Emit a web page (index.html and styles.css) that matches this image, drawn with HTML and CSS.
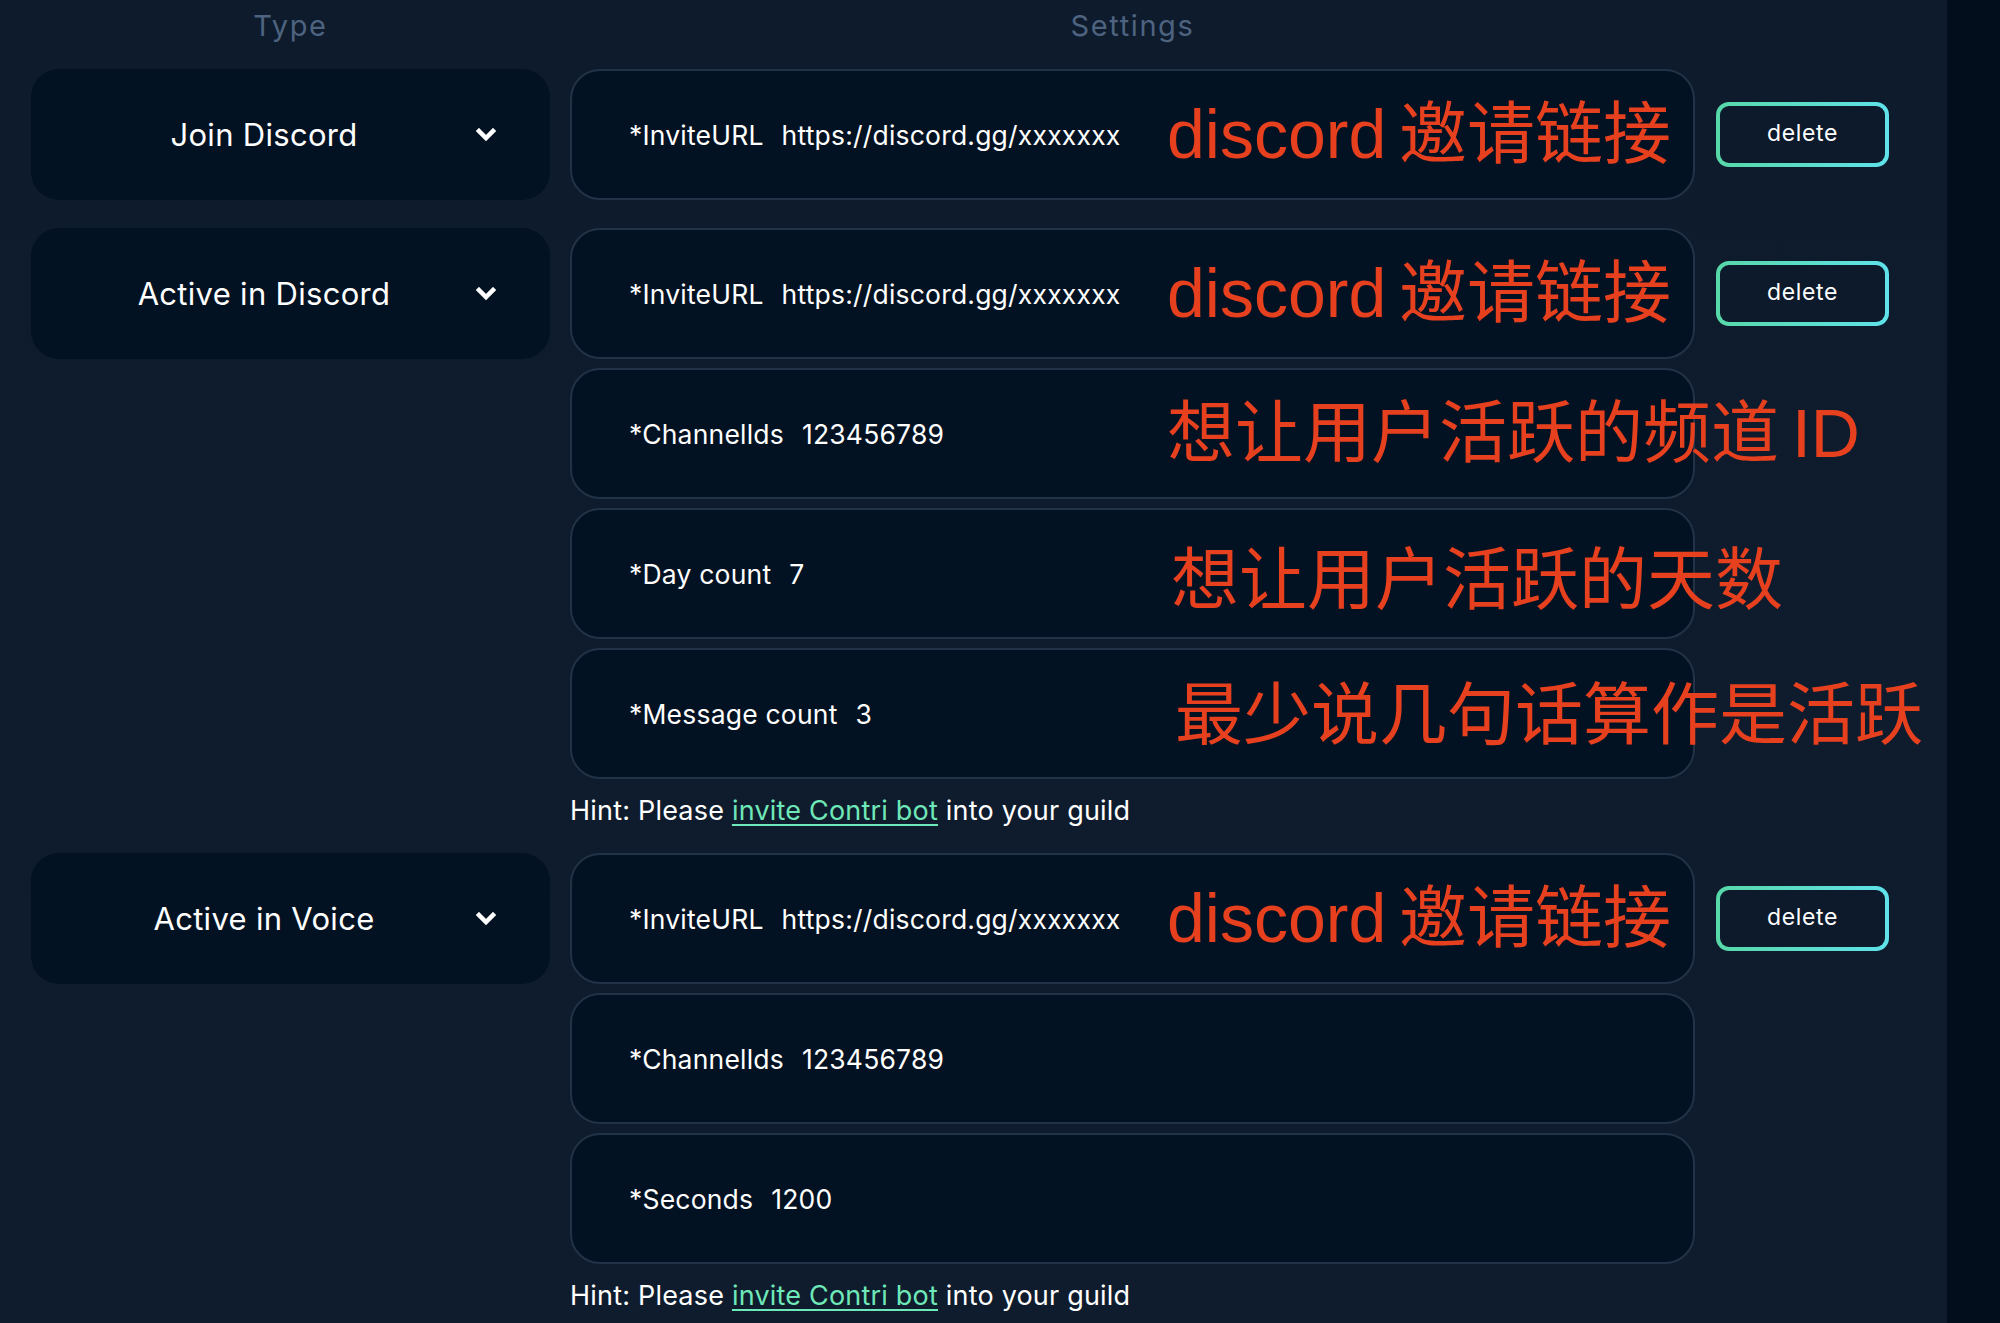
FILE: index.html
```html
<!DOCTYPE html>
<html lang="en">
<head>
<meta charset="utf-8">
<title>Tasks</title>
<link rel="stylesheet" href="styles.css">
</head>
<body>
<div class="page">
  <main class="main">
    <div class="head">
      <div class="head-type">Type</div>
      <div class="head-settings">Settings</div>
    </div>

    <section class="group">
      <div class="type-card">
        <span class="type-name">Join Discord</span>
        <svg class="chev" viewBox="0 0 20 14" width="20" height="14"><path d="M3 3 L10 10 L17 3" fill="none" stroke="#fff" stroke-width="4.5" stroke-linejoin="miter" stroke-linecap="square"/></svg>
      </div>
      <div class="settings">
        <div class="box"><div class="field"><span>*InviteURL</span><span>https://discord.gg/xxxxxxx</span></div><span class="note">discord 邀请链接</span></div>
      </div>
      <button class="del">delete</button>
    </section>

    <section class="group">
      <div class="type-card">
        <span class="type-name">Active in Discord</span>
        <svg class="chev" viewBox="0 0 20 14" width="20" height="14"><path d="M3 3 L10 10 L17 3" fill="none" stroke="#fff" stroke-width="4.5" stroke-linejoin="miter" stroke-linecap="square"/></svg>
      </div>
      <div class="settings">
        <div class="box"><div class="field"><span>*InviteURL</span><span>https://discord.gg/xxxxxxx</span></div><span class="note">discord 邀请链接</span></div>
        <div class="box"><div class="field"><span>*Channellds</span><span>123456789</span></div><span class="note">想让用户活跃的频道 ID</span></div>
        <div class="box"><div class="field"><span>*Day count</span><span>7</span></div><span class="note note-b">想让用户活跃的天数</span></div>
        <div class="box"><div class="field"><span>*Message count</span><span>3</span></div><span class="note note-c">最少说几句话算作是活跃</span></div>
        <p class="hint">Hint: Please <a href="#">invite Contri bot</a> into your guild</p>
      </div>
      <button class="del">delete</button>
    </section>

    <section class="group">
      <div class="type-card">
        <span class="type-name">Active in Voice</span>
        <svg class="chev" viewBox="0 0 20 14" width="20" height="14"><path d="M3 3 L10 10 L17 3" fill="none" stroke="#fff" stroke-width="4.5" stroke-linejoin="miter" stroke-linecap="square"/></svg>
      </div>
      <div class="settings">
        <div class="box"><div class="field"><span>*InviteURL</span><span>https://discord.gg/xxxxxxx</span></div><span class="note">discord 邀请链接</span></div>
        <div class="box"><div class="field"><span>*Channellds</span><span>123456789</span></div></div>
        <div class="box"><div class="field"><span>*Seconds</span><span>1200</span></div></div>
        <p class="hint">Hint: Please <a href="#">invite Contri bot</a> into your guild</p>
      </div>
      <button class="del">delete</button>
    </section>
  </main>
  <aside class="strip"></aside>
</div>
</body>
</html>
```

FILE: styles.css
```css
* { box-sizing: border-box; }
html, body { margin: 0; padding: 0; }
body {
  background: #0e1b2c;
  font-family: "Inter", "Noto Sans", sans-serif;
  color: #ffffff;
  width: 2000px;
  height: 1323px;
  overflow: hidden;
}
.page {
  display: flex;
  height: 1323px;
}
.main {
  width: 1947px;
  padding-left: 31px;
  background: linear-gradient(180deg, #0e1b2c 0%, #0f1c2d 100%);
}
.strip {
  flex: 1;
  background: #020e1c;
}
.head {
  display: grid;
  grid-template-columns: 519px 1125px;
  column-gap: 20px;
  height: 69px;
  padding-top: 7px;
  font-size: 29px;
  letter-spacing: 1.6px;
  color: #4d6380;
  line-height: 38px;
  text-align: center;
}
.group {
  display: grid;
  grid-template-columns: 519px 1125px 173px;
  column-gap: 20px;
  align-items: start;
  margin-bottom: 28px;
}
.type-card {
  height: 131px;
  background: #031222;
  border-radius: 28px;
  display: flex;
  align-items: center;
  padding-right: 53px;
  position: relative;
}
.type-name {
  flex: 1;
  text-align: center;
  font-size: 31px;
  letter-spacing: 0.3px;
}
.chev {
  position: absolute;
  right: 54px;
  top: 59px;
  display: block;
  width: 20px;
  height: 14px;
}
.settings {
  display: flex;
  flex-direction: column;
  gap: 9px;
}
.box {
  height: 131px;
  background: #031222;
  border: 2px solid #223247;
  border-radius: 30px;
  display: flex;
  align-items: center;
  padding-left: 57px;
  white-space: nowrap;
}
.field {
  flex: none;
  width: 538px;
  display: flex;
  gap: 18px;
  font-size: 26.5px;
  letter-spacing: 0.2px;
}
.note {
  flex: none;
  font-family: "Liberation Sans", "Noto Sans CJK SC", sans-serif;
  color: #e6401f;
  font-size: 68px;
  line-height: 1;
  margin-top: -2px;
  word-spacing: -6px;
}
.note-b { margin-left: 4px; margin-top: 13px; }
.note-c { margin-left: 8px; margin-top: 3px; }
.hint {
  margin: 6px 0 -3px;
  font-size: 27px;
  letter-spacing: 0.2px;
  line-height: 34px;
}
.hint a {
  color: #6ee8b8;
  text-decoration: underline;
  text-underline-offset: 4px;
  text-decoration-thickness: 2px;
}
.del {
  margin-top: 33px;
  margin-left: 1px;
  width: 173px;
  height: 65px;
  border: 4px solid transparent;
  border-radius: 13px;
  background:
    linear-gradient(#0c1a2b, #0c1a2b) padding-box,
    linear-gradient(90deg, #57d8a8, #5fe2ea) border-box;
  color: #ffffff;
  font-family: "Inter", "Noto Sans", sans-serif;
  font-size: 23px;
  letter-spacing: 0.6px;
  padding: 0 0 3px;
}
```
